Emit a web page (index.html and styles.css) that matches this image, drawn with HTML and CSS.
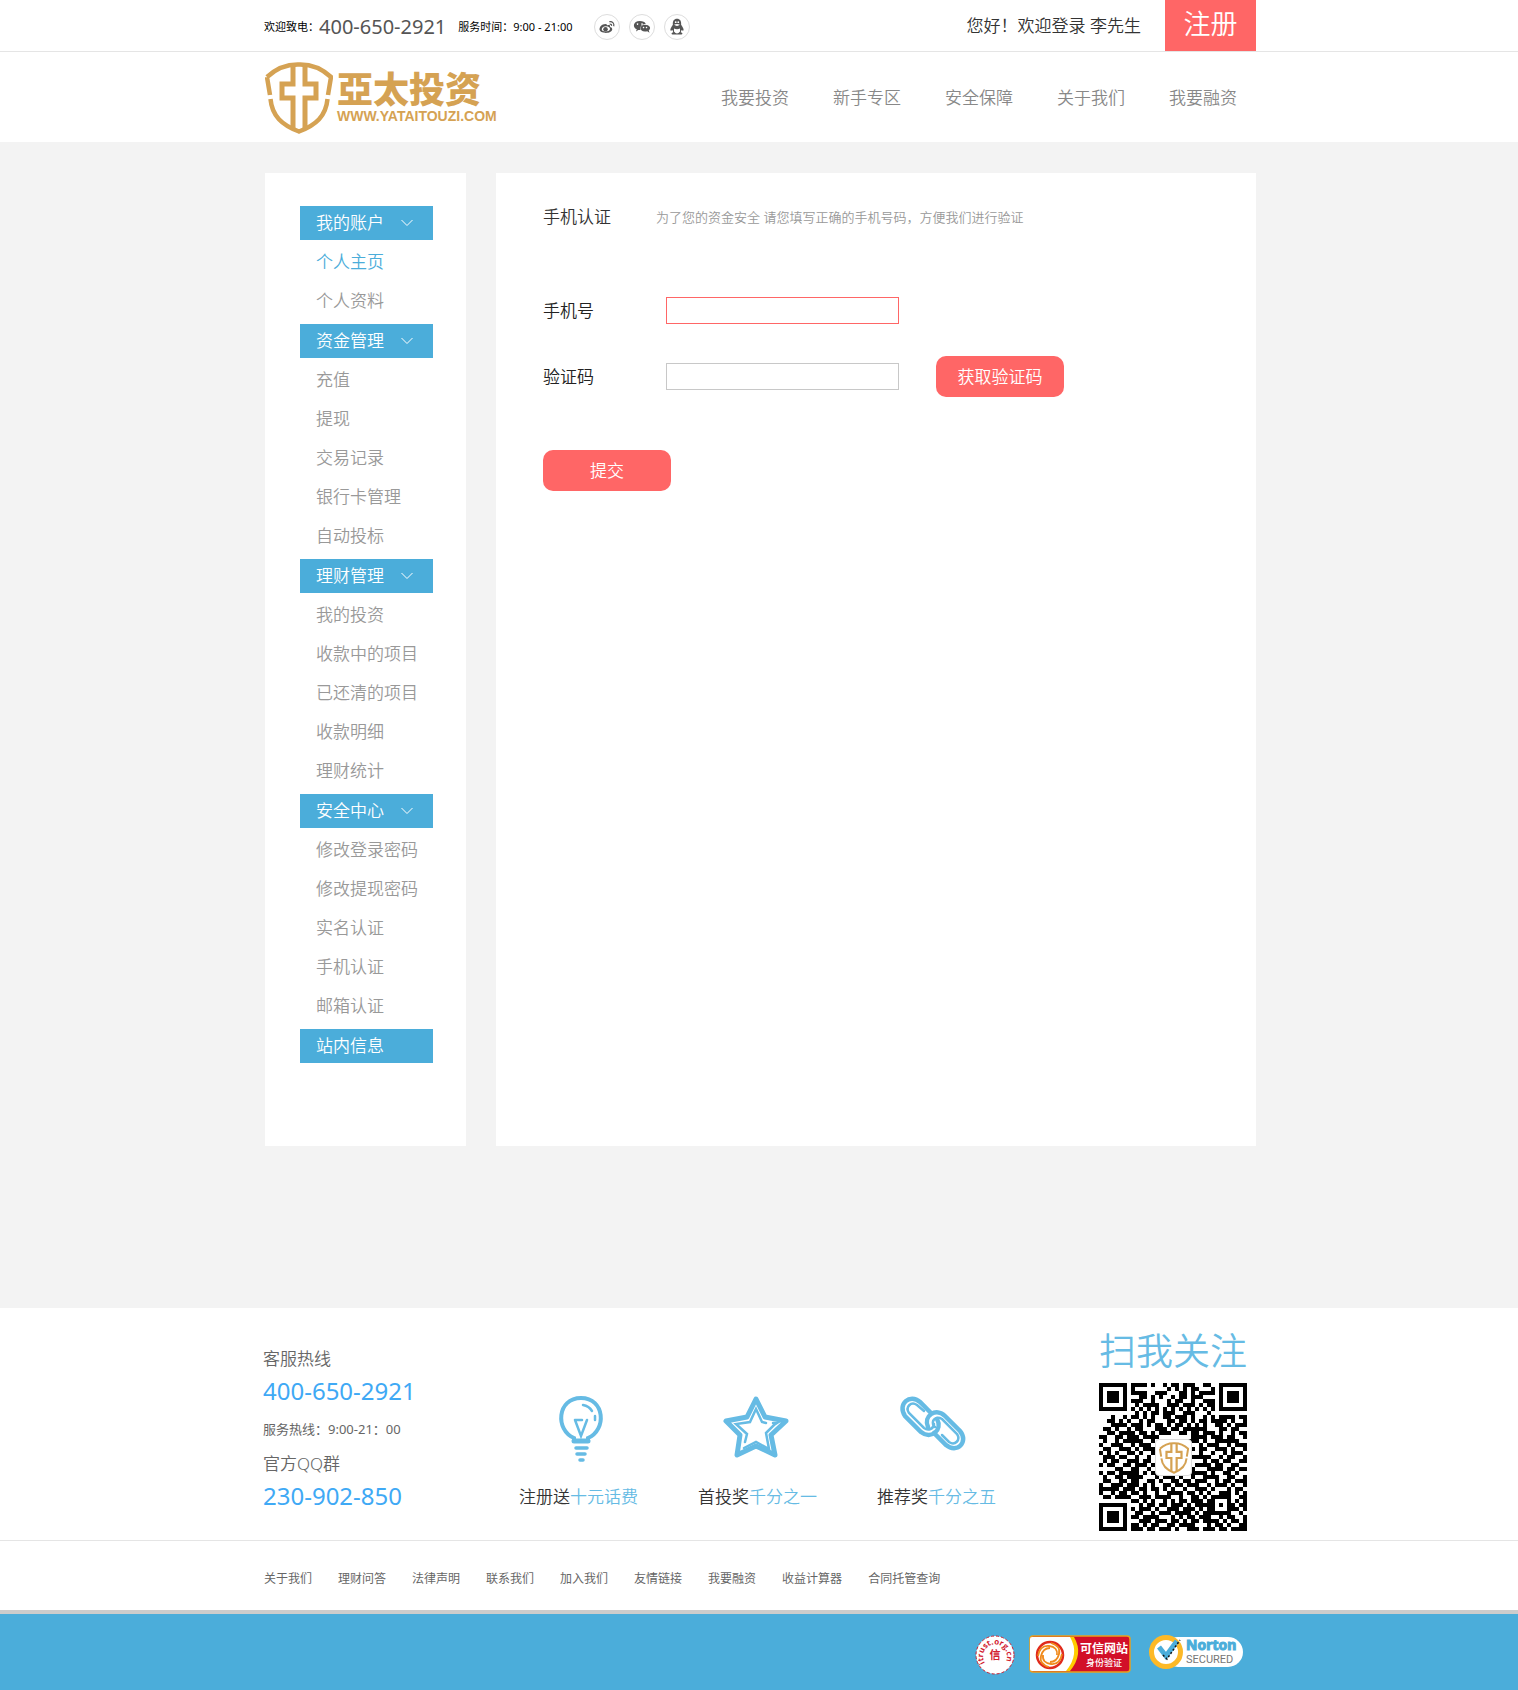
FILE: index.html
```html
<!DOCTYPE html>
<html lang="zh-CN">
<head>
<meta charset="utf-8">
<meta name="viewport" content="width=device-width, initial-scale=1">
<title>亞太投资 - 手机认证</title>
<link rel="stylesheet" href="styles.css">
</head>
<body>
<svg class="defs" width="0" height="0" aria-hidden="true">
  <symbol id="shield" viewBox="0 0 68 72">
    <path d="M2 15Q16 2 34 2.500Q52 2 66 15L63 33M5 33L2 15M5.500 37C7 54 17 63 34 69.500C51 63 61 54 62.500 37" fill="none" stroke="currentColor" stroke-width="4.500"/>
    <path d="M28 4V22H17V36H28V67M40 4V22H51V36H40V67" fill="none" stroke="currentColor" stroke-width="5"/>
  </symbol>
</svg>

<div class="topbar">
  <div class="container topbar-row">
    <div class="hotline">
      <span class="small">欢迎致电：</span>
      <span class="phone">400-650-2921</span>
      <span class="small hours">服务时间：9:00 - 21:00</span>
      <div class="social">
        <a href="#" aria-label="微博"><svg viewBox="0 0 24 24" width="18" height="18"><path fill-rule="evenodd" d="M10 8C5 8 2 12 2 15c0 6 16 7 17 0 0-2-2-3-3-3 1-3-2-3-4-2 0-1 0-2-2-2zM10.500 11c4 0 6 2 5.500 4-1 4-11 4-11 0 0-2 2-4 5.500-4z"/><circle cx="10" cy="15" r="3"/><path d="M15 5c4-1 7 2 6 6M15.500 8c2 0 3 1 2.500 2.500" fill="none" stroke="#555" stroke-width="1.600"/></svg></a>
        <a href="#" aria-label="微信"><svg viewBox="0 0 24 24" width="18" height="18"><path fill-rule="evenodd" d="M9 4c-9 0-10 9-4 11l-1 3 3-2h3c-1-5 2-8 7-8-1-3-4-4-8-4zM6 7a1 1 0 1 0 .1 0zM12 7a1 1 0 1 0 .1 0z"/><path fill-rule="evenodd" d="M16 9c-8 0-8 9 0 9 1 0 2 0 3-.500l3 2-1-3c4-3 1-7.500-5-7.500zM14 11.500a1 1 0 1 0 .1 0zM18 11.500a1 1 0 1 0 .1 0z"/></svg></a>
        <a href="#" aria-label="QQ"><svg viewBox="0 0 24 24" width="18" height="18"><path d="M12 1C8 1 6 4 6.500 9 4 13 2 16 4 17l2-1 1 3c-3 1-3 3 0 3h10c3 0 3-2 0-3l1-3 2 1c2-1 0-4-2.500-8C18 4 16 1 12 1z"/><path fill="#fff" d="M8 14q4 2 8 0v4q-4 5-8 0z"/><path fill="#fff" d="M8 9q4 3 8 0-4-2-8 0z"/><circle cx="10.300" cy="5.500" r="1.200" fill="#fff"/><circle cx="13.700" cy="5.500" r="1.200" fill="#fff"/></svg></a>
      </div>
    </div>
    <span class="welcome">您好！欢迎登录 李先生</span>
    <a class="register" href="#">注册</a>
  </div>
</div>

<header class="header">
  <div class="container header-row">
    <a class="logo" href="#">
      <svg width="68" height="72" aria-hidden="true"><use href="#shield"/></svg>
      <span class="logo-text"><span class="logo-name">亞太投资</span><span class="logo-url">WWW.YATAITOUZI.COM</span></span>
    </a>
    <nav class="nav">
      <a href="#">我要投资</a><a href="#">新手专区</a><a href="#">安全保障</a><a href="#">关于我们</a><a href="#">我要融资</a>
    </nav>
  </div>
</header>

<main class="main">
  <div class="container columns">
    <aside class="sidebar">
      <section>
        <h2>我的账户<svg class="chev" width="12" height="8" viewBox="0 0 12 8"><path d="M.5 1L6 6.500 11.500 1"/></svg></h2>
        <ul><li><a class="active" href="#">个人主页</a></li><li><a href="#">个人资料</a></li></ul>
      </section>
      <section>
        <h2>资金管理<svg class="chev" width="12" height="8" viewBox="0 0 12 8"><path d="M.5 1L6 6.500 11.500 1"/></svg></h2>
        <ul><li><a href="#">充值</a></li><li><a href="#">提现</a></li><li><a href="#">交易记录</a></li><li><a href="#">银行卡管理</a></li><li><a href="#">自动投标</a></li></ul>
      </section>
      <section>
        <h2>理财管理<svg class="chev" width="12" height="8" viewBox="0 0 12 8"><path d="M.5 1L6 6.500 11.500 1"/></svg></h2>
        <ul><li><a href="#">我的投资</a></li><li><a href="#">收款中的项目</a></li><li><a href="#">已还清的项目</a></li><li><a href="#">收款明细</a></li><li><a href="#">理财统计</a></li></ul>
      </section>
      <section>
        <h2>安全中心<svg class="chev" width="12" height="8" viewBox="0 0 12 8"><path d="M.5 1L6 6.500 11.500 1"/></svg></h2>
        <ul><li><a href="#">修改登录密码</a></li><li><a href="#">修改提现密码</a></li><li><a href="#">实名认证</a></li><li><a href="#">手机认证</a></li><li><a href="#">邮箱认证</a></li></ul>
      </section>
      <section><h2>站内信息</h2></section>
    </aside>

    <section class="panel">
      <div class="panel-head">
        <h1>手机认证</h1>
        <p>为了您的资金安全 请您填写正确的手机号码，方便我们进行验证</p>
      </div>
      <form>
        <div class="field">
          <label for="mobile">手机号</label>
          <input class="error" id="mobile" type="tel">
        </div>
        <div class="field">
          <label for="code">验证码</label>
          <input id="code" type="text">
          <button class="btn" type="button">获取验证码</button>
        </div>
        <button class="btn" type="submit">提交</button>
      </form>
    </section>
  </div>
</main>

<footer>
  <div class="container info">
    <div class="contact">
      <p>客服热线</p>
      <p class="number">400-650-2921</p>
      <p class="service">服务热线：9:00-21：00</p>
      <p>官方QQ群</p>
      <p class="number">230-902-850</p>
    </div>
    <div class="features">
      <div class="feature">
        <svg width="66" height="66" viewBox="0 0 66 66" fill="none" stroke="#66bbe4" stroke-linecap="round">
          <path d="M28 44V42C9 34 11 2 35 2S61 34 42 42V44" stroke-width="4"/>
          <path d="M28 45H42" stroke-width="5"/><path d="M30 52H41M31 58H39M34 64H37" stroke-width="3.500"/>
          <path d="M29 24H36M29 24L35 40L41 24M37 9Q43 10 46 15M49 20V24" stroke-width="2.500"/>
        </svg>
        <p>注册送<em>十元话费</em></p>
      </div>
      <div class="feature">
        <svg width="66" height="66" viewBox="4 1 66 66" fill="none" stroke="#66bbe4" stroke-linejoin="round" stroke-linecap="round">
          <path d="M35 4L44 22L65 26L50 40L54 60L35 51L16 60L19 40L5 26L26 22Z" stroke-width="5"/>
          <path d="M45 28L41 27L35 14L29 27L15 29L26 39L24 47M23 53L35 47L48 54L45 38L53 30L56 28H52" stroke-width="2.500" stroke-linejoin="miter"/>
        </svg>
        <p>首投奖<em>千分之一</em></p>
      </div>
      <div class="feature">
        <svg width="66" height="66" viewBox="4 0 66 66" fill="none" stroke="#66bbe4" stroke-linecap="round">
          <path d="M31 17L20 6C10-3-3 8 5 20L21 36C31 44 43 34 37 23" stroke-width="4.500"/>
          <path d="M34 37L46 49C57 58 69 46 60 35L45 20C36 11 23 20 28 31" stroke-width="4.500"/>
          <path d="M24 15L17 9C11 5 5 11 9 17L24 32C28 35 34 33 34 28M42 39L49 46C55 50 61 44 57 38L42 23C37 20 32 23 33 28C33 30 34 30 35 31" stroke-width="2.500"/>
        </svg>
        <p>推荐奖<em>千分之五</em></p>
      </div>
    </div>
    <div class="follow">
      <h2>扫我关注</h2>
      <div class="qr">
        <svg id="qr" viewBox="0 0 37 37" width="148" height="148" role="img" aria-label="二维码"></svg>
        <span class="qr-logo"><svg width="30" height="32"><use href="#shield"/></svg></span>
      </div>
    </div>
  </div>
  <div class="links-bar">
    <nav class="container links">
      <a href="#">关于我们</a><a href="#">理财问答</a><a href="#">法律声明</a><a href="#">联系我们</a><a href="#">加入我们</a><a href="#">友情链接</a><a href="#">我要融资</a><a href="#">收益计算器</a><a href="#">合同托管查询</a>
    </nav>
  </div>
  <div class="bottom">
    <div class="container badges">
      <a href="#" aria-label="itrust.org.cn"><svg width="40" height="40" viewBox="0 0 40 40">
        <circle cx="20" cy="20" r="19" fill="#fff" stroke="#d2202f" stroke-dasharray="3 2"/>
        <path id="ring" d="M10 28A12 12 0 1 1 30 28" fill="none"/>
        <text class="ring-text"><textPath href="#ring">itrust.org.cn</textPath></text>
        <text x="20" y="24" class="seal">信</text>
      </svg></a>
      <a href="#" aria-label="可信网站身份验证"><svg width="102" height="38" viewBox="0 0 102 38">
        <rect x="1" y="1" width="100" height="36" rx="3" fill="#d20f28" stroke="#e8a01c" stroke-width="1.500"/>
        <path d="M3 2H43Q52 19 40 36H3Q1 36 1 34V4Q1 2 3 2Z" fill="#fff"/>
        <path d="M41 2H45Q55 19 41 36H37Q51 19 41 2Z" fill="#fc0"/>
        <g fill="none" stroke-width="1.800"><circle cx="21" cy="20" r="13" stroke="#e02b1c" stroke-width="2.500"/><g stroke="#f08a1c"><path d="M9 21Q11 10 20 11T28 20"/><path d="M33 19Q31 30 22 29T14 20"/><path d="M20 32Q10 29 12 21T21 13"/><path d="M22 8Q32 11 30 19T21 27"/></g></g>
        <text x="75" y="18" class="trust-big">可信网站</text><text x="75" y="31" class="trust-small">身份验证</text>
      </svg></a>
      <a class="norton-link" href="#" aria-label="Norton Secured"><svg width="94" height="38" viewBox="0 0 94 38">
        <rect x="14" y="2" width="80" height="30" rx="15" fill="#fff"/>
        <circle cx="17" cy="17" r="14.500" fill="#fff" stroke="#fdb927" stroke-width="5"/>
        <path d="M10 12L17 21L28 6" fill="none" stroke="#4badda" stroke-width="5"/><path d="M14 20L18 24L31 5" fill="none" stroke="#111" stroke-width="1.500" stroke-dasharray="2 2"/>
        <text x="37" y="15" class="norton">Norton</text><text x="37" y="28" class="secured">SECURED</text>
      </svg></a>
    </div>
  </div>
</footer>
<script src="qr.js"></script>
</body>
</html>
```
FILE: styles.css
```css
* { box-sizing: border-box; }
body {
  margin: 0;
  background: #fff;
  color: #333;
  font-family: "Noto Sans", "Noto Sans CJK SC", sans-serif;
  font-size: 17px;
  font-weight: 350;
  line-height: 24px;
}
h1, h2, p, ul { margin: 0; padding: 0; font-size: 17px; font-weight: 350; }
ul { list-style: none; }
a { color: inherit; text-decoration: none; }
em { font-style: normal; color: #66bbe4; }
svg { display: block; overflow: visible; }
.defs { position: absolute; }
.container { max-width: 994px; margin: 0 auto; padding-left: 2px; }

.topbar { border-bottom: 1px solid #e5e5e5; }
.topbar-row { display: flex; align-items: center; height: 51px; }
.hotline { display: flex; align-items: center; padding-top: 3px; }
.small { font-size: 11px; font-weight: 400; color: #000; }
.phone { font-size: 20px; font-weight: 400; color: #555; }
.hours { margin-left: 12px; }
.social { display: flex; gap: 9px; margin-left: 22px; }
.social a {
  display: flex; align-items: center; justify-content: center;
  width: 26px; height: 26px; border: 1px solid #ddd; border-radius: 50%;
}
.social svg { fill: #555; }
.welcome { margin-left: auto; }
.register {
  align-self: stretch; width: 91px; margin-left: 24px;
  background: #f66; color: #fff; font-size: 27px; line-height: 48px; text-align: center;
}

.header-row { display: flex; align-items: center; height: 90px; padding-top: 2px; }
.logo { display: flex; align-items: center; gap: 4px; padding-left: 1px; color: #d5a253; }
.logo-text { display: flex; flex-direction: column; }
.logo-name { font-size: 36px; font-weight: 900; line-height: 36px; }
.logo-url { font: bold 14px/16px "Liberation Sans", Arial, sans-serif; }
.nav { display: flex; gap: 44px; margin-left: auto; padding-right: 19px; color: #888; }

.main { padding: 31px 0 162px; background: #f3f3f3; }
.columns { display: flex; gap: 30px; padding-left: 3px; }
.sidebar { width: 201px; padding: 33px 33px 79px 35px; background: #fff; color: #999; }
.sidebar section { margin-bottom: 4px; }
.sidebar h2 {
  display: flex; align-items: center; gap: 17px; height: 34px; margin-bottom: 2px;
  padding-left: 16px; background: #4badda; color: #fff;
}
.sidebar li { height: 39px; padding-left: 16px; line-height: 39px; white-space: nowrap; }
.active { color: #4badda; }
.chev { fill: none; stroke: #fff; }

.panel { flex: 1; padding: 32px 47px; background: #fff; }
.panel-head { display: flex; align-items: center; gap: 45px; margin-bottom: 61px; }
.panel-head p { font-size: 13px; color: #999; }
.field { display: flex; align-items: center; height: 41px; margin-bottom: 25px; }
.field label { width: 123px; color: #222; }
.field input { width: 233px; height: 27px; padding: 0 6px; border: 1px solid #c8c8c8; background: #fff; font: inherit; }
.field input.error { border-color: #f66; }
.btn {
  width: 128px; height: 41px; padding: 0; border: 0; border-radius: 10px;
  background: #f66; color: #fff; font: inherit; line-height: 38px;
}
.field .btn { margin-left: 37px; }
form > .btn { margin-top: 28px; }

.info { display: flex; height: 232px; padding: 24px 9px 0 1px; }
.contact { width: 256px; padding-top: 15px; color: #666; }
.contact p { margin-bottom: 8px; }
.contact .number { font-size: 24px; font-weight: 400; color: #3fa9f5; margin-bottom: 16px; }
.contact .service { font-size: 13px; font-weight: 400; line-height: 20px; margin-bottom: 13px; }
.features { display: flex; gap: 60px; padding-top: 64px; }
.feature svg { margin: 0 auto 23px; }
.follow { margin-left: auto; }
.follow h2 { font-size: 37px; line-height: 38px; margin-bottom: 13px; color: #66bbe4; }
.qr { position: relative; }
.qr-logo {
  position: absolute; left: 56px; top: 56px; display: flex; align-items: center; justify-content: center;
  width: 37px; height: 37px; border: 1px solid #ddd; border-radius: 4px; background: #fff; color: #d5a253;
}

.links-bar { border-top: 1px solid #e5e5e5; border-bottom: 4px solid #ccc; }
.links { display: flex; gap: 26px; padding-top: 26px; padding-bottom: 19px; font-size: 12px; font-weight: 400; color: #666; }
.bottom { background: #4badda; }
.badges { display: flex; justify-content: flex-end; gap: 14px; height: 76px; padding: 21px 13px 0 0; }
.norton-link { margin-left: 4px; }
.ring-text { font: bold 8px "Open Sans", sans-serif; fill: #d2202f; }
.seal { font: bold 11px "Noto Sans CJK SC", sans-serif; fill: #d2202f; text-anchor: middle; }
.trust-big { font: bold 12px "Noto Sans CJK SC", sans-serif; fill: #fff; text-anchor: middle; }
.trust-small { font: 500 9px "Noto Sans CJK SC", sans-serif; fill: #fff; text-anchor: middle; }
.norton { font: bold 14px "Noto Sans", sans-serif; fill: #4badda; stroke: #4badda; }
.secured { font: 11px Roboto, sans-serif; fill: #777; }
```
FILE: qr.js
```js
// One string per row of modules, 1 = dark.
const rows = [
  "1111111011110100101101110011001111111",
  "1000001010000000010101011000101000001",
  "1011101011110011100011010111101011101",
  "1011101000110101001011011100001011101",
  "1011101011100100010110010011101011101",
  "1000001001011110011101110101101000001",
  "1111111010101010101010101010101111111",
  "0000000001010110111001110001000000000",
  "0001001011010100110111010010101111011",
  "0011010100101100011011010110111101001",
  "0001111011101011010110101010011010111",
  "0110100101100011101101111110001101100",
  "0011011110110101110011011011101001011",
  "1100110111011110000000011110111011001",
  "0100101111100100000000111010011111100",
  "1001110010111010000000000101110010111",
  "0110011101011110000000010110011101001",
  "1010100110100110000000000100100101110",
  "0111011001001010000000011111001011001",
  "0101100111011000000000100010110110011",
  "1011001101110110000000001111011001100",
  "0000110011001010000000110001111011011",
  "1011011111010110000000111110100110100",
  "0100110111100010111010010011110011001",
  "0110011011001101001101101110010110111",
  "1001110111010100110110111001011101001",
  "1111101110110110101001001110100010110",
  "1001011011010010011110110101001110101",
  "0110111100111011110010011010111110011",
  "0000000011010100101011011101100010101",
  "1111111000101101101110101111101011011",
  "1000001010111010011101110101100011101",
  "1011101001100101110111101011111110010",
  "1011101011011110001010110111001011001",
  "1011101000111011101101011011110101101",
  "1000001011010110011011110001011010011",
  "1111111011101101110100111011101101111"
];
let d = "";
rows.forEach((row, y) => {
  for (const run of row.matchAll(/1+/g)) d += `M${run.index} ${y}h${run[0].length}v1h-${run[0].length}z`;
});
const path = document.createElementNS("http://www.w3.org/2000/svg", "path");
path.setAttribute("d", d);
path.setAttribute("shape-rendering", "crispEdges");
document.getElementById("qr").append(path);
```
